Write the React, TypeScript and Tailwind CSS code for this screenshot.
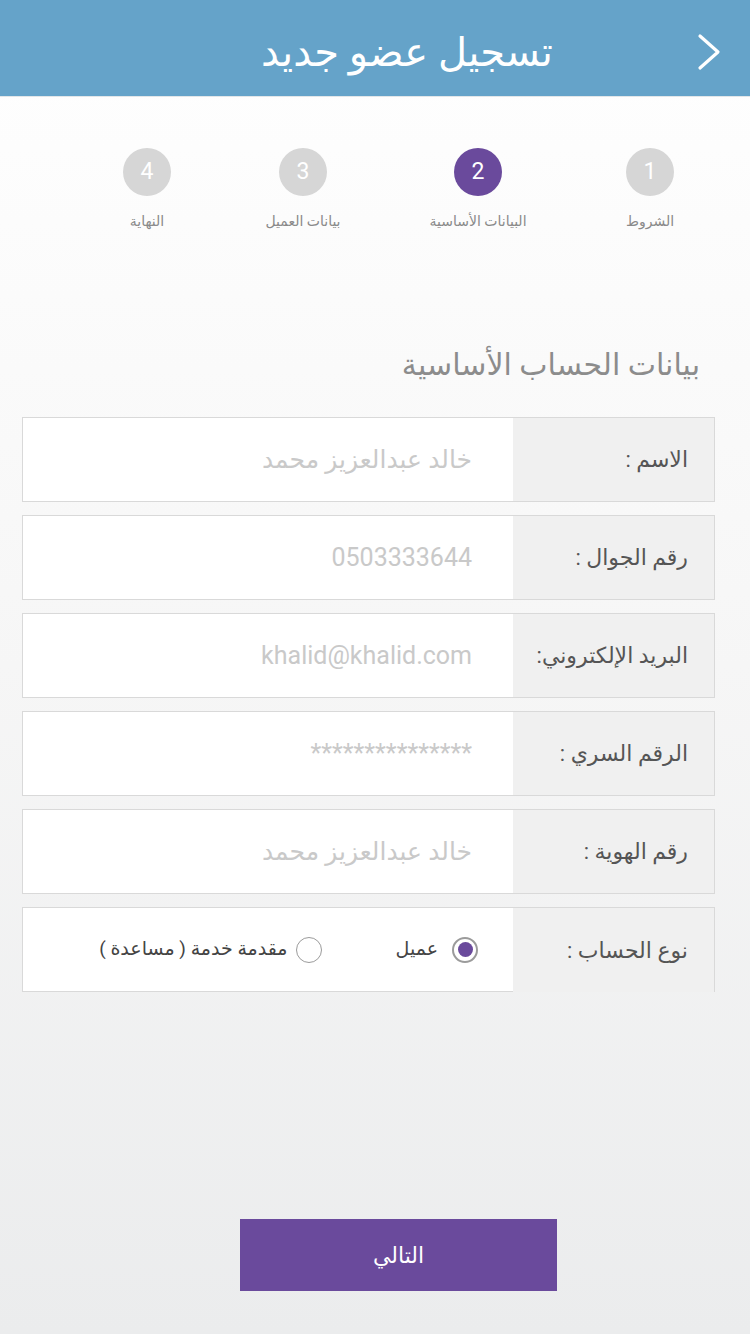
const steps = [
  { n: 1, label: "الشروط", w: "w-[200px]" },
  { n: 2, label: "البيانات الأساسية", w: "w-[144px]" },
  { n: 3, label: "بيانات العميل", w: "w-[206px]" },
  { n: 4, label: "النهاية", w: "w-[106px]" },
];

const fields = [
  { label: "الاسم :", value: "خالد عبدالعزيز محمد" },
  { label: "رقم الجوال :", value: "0503333644" },
  { label: "البريد الإلكتروني:", value: "khalid@khalid.com" },
  { label: "الرقم السري :", value: "***************" },
  { label: "رقم الهوية :", value: "خالد عبدالعزيز محمد" },
];

const font = { fontFamily: '"Roboto", "DejaVu Sans", sans-serif' };

const App = () => {
  const active = 2;

  return (
    <div
      dir="rtl"
      style={font}
      className="w-[750px] min-h-[1334px] bg-gradient-to-b from-white via-[#f6f6f6] to-[#ebeced] flex flex-col"
    >
      {/* Header */}
      <header className="h-[97px] bg-[#65a3c9] border-b border-[#e2e6e9] flex items-center pr-[28px]">
        <svg width="26" height="38" viewBox="0 0 26 38" fill="none" className="mt-[8px]">
          <polyline points="4,3 22,19 4,35" stroke="white" strokeWidth="3.2" strokeLinecap="round" strokeLinejoin="round" />
        </svg>
        <h1 className="mr-[143px] text-white text-[40px] leading-none pt-[10px]">تسجيل عضو جديد</h1>
      </header>

      {/* Steps */}
      <div className="flex pt-[51px]">
        {steps.map((s) => (
          <div key={s.n} className={`${s.w} flex flex-col items-center`}>
            <div
              className={
                s.n === active
                  ? "w-[48px] h-[48px] rounded-full bg-[#6a4a9c] text-white flex items-center justify-center text-[23px]"
                  : "w-[48px] h-[48px] rounded-full bg-[#d6d6d6] text-white flex items-center justify-center text-[23px]"
              }
            >
              {s.n}
            </div>
            <span className="mt-[15px] text-[14px] text-[#8a8a8a]">{s.label}</span>
          </div>
        ))}
      </div>

      {/* Section title */}
      <h2 className="mt-[110px] pr-[50px] text-[30px] text-[#8c8c8c]">بيانات الحساب الأساسية</h2>

      {/* Form */}
      <div className="mt-[30px] mr-[35px] ml-[22px] flex flex-col gap-[13px]">
        {fields.map((f) => (
          <div key={f.label} className="h-[85px] flex border border-[#d9d9d9] bg-white">
            <div className="w-[201px] bg-[#f0f0f0] flex items-center pr-[26px] text-[22px] text-[#555]">{f.label}</div>
            <div className="flex-1 flex items-center pr-[41px] text-[25px] text-[#c9c9c9]">{f.value}</div>
          </div>
        ))}
        <div className="h-[85px] flex border border-b-0 border-[#d9d9d9] bg-white">
          <div className="w-[201px] bg-[#f0f0f0] flex items-center pr-[26px] text-[22px] text-[#555]">نوع الحساب :</div>
          <div className="flex-1 flex items-center pr-[35px] border-b border-[#d9d9d9] text-[19px] text-[#444]">
            <span className="w-[26px] h-[26px] rounded-full border-2 border-[#9b9b9b] flex items-center justify-center">
              <span className="w-[15px] h-[15px] rounded-full bg-[#6a4a9c]" />
            </span>
            <span className="mr-[14px]">عميل</span>
            <span className="mr-[74px] w-[26px] h-[26px] rounded-full border border-[#9b9b9b]" />
            <span className="mr-[8px]">مقدمة خدمة ( مساعدة )</span>
          </div>
        </div>
      </div>

      {/* Next */}
      <div className="mt-[227px] flex" dir="ltr">
        <button className="ml-[240px] w-[317px] h-[72px] bg-[#6a4a9c] text-white text-[22px]">التالي</button>
      </div>
    </div>
  );
};

export default App;
